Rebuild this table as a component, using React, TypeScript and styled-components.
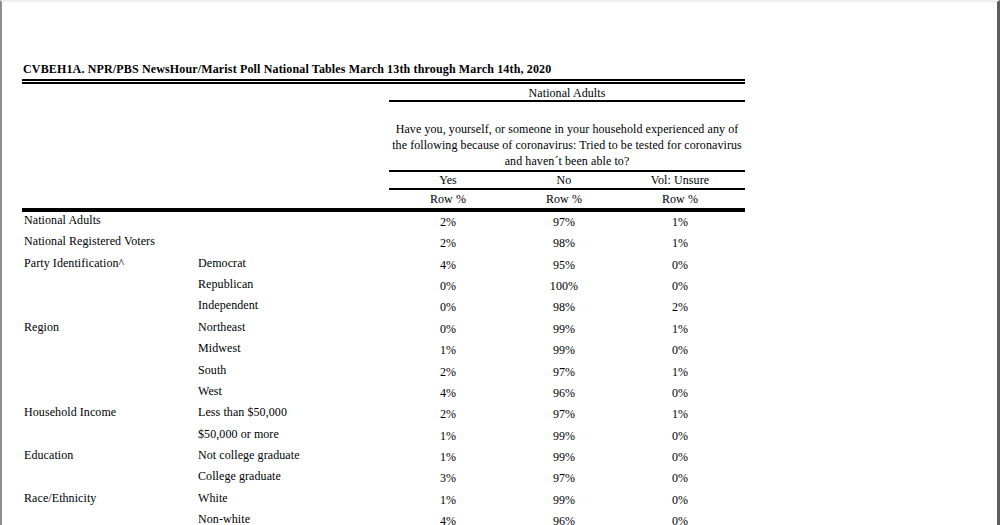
import React from "react";
import styled, { createGlobalStyle } from "styled-components";

const Global = createGlobalStyle`
  html, body { margin: 0; padding: 0; background: #ffffff; }
  body { font-family: "Liberation Serif", "Times New Roman", serif; color: #000; }
`;

const Sheet = styled.div`
  width: 1000px;
  height: 525px;
  box-sizing: border-box;
  overflow: hidden;
  background: #ffffff;
  border-top: 2px solid #eeeeee;
  border-left: 2px solid #8d8d8d;
  border-right: 3px solid #5c5c5c;
  padding: 60px 0 0 20px;
`;

const Table = styled.div`
  width: 723px;
  display: flex;
  flex-direction: column;
  letter-spacing: 0.08px;
`;

const Title = styled.div`
  font-weight: bold;
  font-size: 12px;
  line-height: 14px;
  padding-left: 1px;
  letter-spacing: 0.15px;
  white-space: nowrap;
`;

const DoubleRule = styled.div`
  margin-top: 3px;
  height: 1px;
  border-top: 2px solid #000;
  border-bottom: 2px solid #000;
`;

const Banner = styled.div`
  margin-left: 367px;
  width: 356px;
  display: flex;
  flex-direction: column;
`;

const Centered = styled.div<{ $lh?: number; $top?: number; $pad?: number }>`
  font-size: 12px;
  line-height: ${(p) => p.$lh ?? 14}px;
  margin-top: ${(p) => p.$top ?? 0}px;
  padding-top: ${(p) => p.$pad ?? 0}px;
  text-align: center;
  white-space: nowrap;
`;

const Rule = styled.div<{ $top?: number }>`
  height: 0;
  margin-top: ${(p) => p.$top ?? 0}px;
  border-top: 2px solid #000;
`;

const Heads = styled.div<{ $h: number; $pad?: number }>`
  display: grid;
  grid-template-columns: 118px 114px 118px;
  box-sizing: border-box;
  height: ${(p) => p.$h}px;
  padding-top: ${(p) => p.$pad ?? 0}px;
  font-size: 12px;
  line-height: 16px;
  text-align: center;
`;

const ThickRule = styled.div`
  height: 0;
  border-top: 4px solid #000;
`;

const Rows = styled.div`
  display: grid;
  grid-template-columns: 176px 191px 118px 114px 118px;
  grid-auto-rows: 21.36px;
  font-size: 12px;
  line-height: 14px;
`;

const Label = styled.div<{ $pad?: number }>`
  padding-top: 1px;
  padding-left: ${(p) => p.$pad ?? 0}px;
  white-space: nowrap;
`;

const Value = styled.div`
  padding-top: 3px;
  text-align: center;
`;

type Row = [string, string, string, string, string];

const rows: Row[] = [
  ["National Adults", "", "2%", "97%", "1%"],
  ["National Registered Voters", "", "2%", "98%", "1%"],
  ["Party Identification^", "Democrat", "4%", "95%", "0%"],
  ["", "Republican", "0%", "100%", "0%"],
  ["", "Independent", "0%", "98%", "2%"],
  ["Region", "Northeast", "0%", "99%", "1%"],
  ["", "Midwest", "1%", "99%", "0%"],
  ["", "South", "2%", "97%", "1%"],
  ["", "West", "4%", "96%", "0%"],
  ["Household Income", "Less than $50,000", "2%", "97%", "1%"],
  ["", "$50,000 or more", "1%", "99%", "0%"],
  ["Education", "Not college graduate", "1%", "99%", "0%"],
  ["", "College graduate", "3%", "97%", "0%"],
  ["Race/Ethnicity", "White", "1%", "99%", "0%"],
  ["", "Non-white", "4%", "96%", "0%"],
];

export default function App() {
  return (
    <>
      <Global />
      <Sheet>
        <Table>
          <Title>
            CVBEH1A. NPR/PBS NewsHour/Marist Poll National Tables March 13th through March 14th, 2020
          </Title>
          <DoubleRule />
          <Banner>
            <Centered $lh={14} $pad={2}>National Adults</Centered>
            <Rule />
            <Centered $lh={16} $top={19}>
              Have you, yourself, or someone in your household experienced any of
              <br />
              the following because of coronavirus: Tried to be tested for coronavirus
              <br />
              and haven´t been able to?
            </Centered>
            <Rule $top={1} />
            <Heads $h={16}>
              <div>Yes</div>
              <div>No</div>
              <div>Vol: Unsure</div>
            </Heads>
            <Rule />
            <Heads $h={18} $pad={1}>
              <div>Row %</div>
              <div>Row %</div>
              <div>Row %</div>
            </Heads>
          </Banner>
          <ThickRule />
          <Rows>
            {rows.map((r, i) => (
              <React.Fragment key={i}>
                <Label $pad={2}>{r[0]}</Label>
                <Label>{r[1]}</Label>
                <Value>{r[2]}</Value>
                <Value>{r[3]}</Value>
                <Value>{r[4]}</Value>
              </React.Fragment>
            ))}
          </Rows>
        </Table>
      </Sheet>
    </>
  );
}
